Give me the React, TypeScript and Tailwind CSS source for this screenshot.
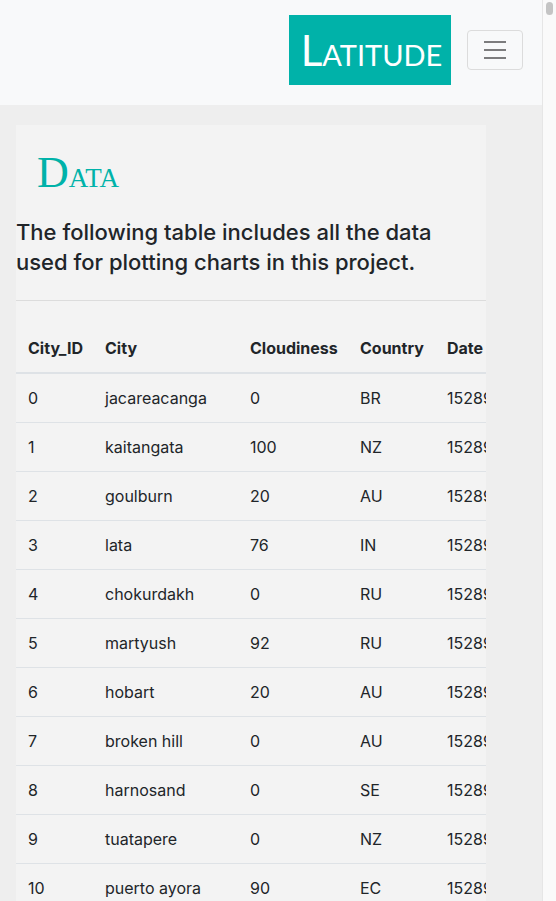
const rows = [
  ["0", "jacareacanga", "0", "BR", "1528968442"],
  ["1", "kaitangata", "100", "NZ", "1528968443"],
  ["2", "goulburn", "20", "AU", "1528968444"],
  ["3", "lata", "76", "IN", "1528968445"],
  ["4", "chokurdakh", "0", "RU", "1528968446"],
  ["5", "martyush", "92", "RU", "1528968447"],
  ["6", "hobart", "20", "AU", "1528968448"],
  ["7", "broken hill", "0", "AU", "1528968449"],
  ["8", "harnosand", "0", "SE", "1528968450"],
  ["9", "tuatapere", "0", "NZ", "1528968451"],
  ["10", "puerto ayora", "90", "EC", "1528968452"],
  ["11", "leningradskiy", "88", "RU", "1528968453"],
];

export default function App() {
  return (
    <div className="w-[556px] h-[901px] overflow-hidden flex font-['Inter',sans-serif] text-[#212529]">
      <div className="flex-1 flex flex-col bg-[#eeeeee] min-w-0">
        <nav className="h-[105px] shrink-0 bg-[#f8f9fa] flex items-start justify-end pr-[19px] pt-[15px]">
          <div className="w-[162px] h-[70px] pl-[3px] bg-[#00b2a9] text-white flex items-center justify-center font-['Lato',sans-serif] text-[42px] [font-variant:small-caps] leading-none">
            Latitude
          </div>
          <button className="ml-[16px] mt-[15px] w-[56px] h-[40px] border border-[#dcdcdc] rounded-[4px] flex items-center justify-center">
            <svg width="30" height="30" viewBox="0 0 30 30">
              <path d="M4 7h22M4 15h22M4 23h22" stroke="rgba(0,0,0,0.5)" strokeWidth="2" />
            </svg>
          </button>
        </nav>
        <div className="mt-[20px] ml-[16px] w-[470px] bg-[#f3f3f3] overflow-hidden">
          <h1 className="pl-[21px] pt-[24px] font-['Liberation_Serif',serif] text-[#00b2a9] leading-[48px] font-normal">
            <span className="text-[44px]">D</span>
            <span className="text-[27px] uppercase">ata</span>
          </h1>
          <p className="mt-[11px] text-[22px] leading-[30px] font-medium pr-[40px]">
            The following table includes all the data used for plotting charts in this project.
          </p>
          <hr className="mt-[23px] border-t border-[#dcdcdc]" />
          <table className="mt-[23px] table-fixed border-collapse w-[700px] text-[16px] leading-[24px]">
            <colgroup>
              <col className="w-[77px]" />
              <col className="w-[145px]" />
              <col className="w-[110px]" />
              <col className="w-[87px]" />
              <col className="w-[281px]" />
            </colgroup>
            <thead>
              <tr className="border-b-2 border-[#dee2e6]">
                {["City_ID", "City", "Cloudiness", "Country", "Date"].map((h) => (
                  <th key={h} className="p-[12px] text-left font-bold">
                    {h}
                  </th>
                ))}
              </tr>
            </thead>
            <tbody>
              {rows.map((r) => (
                <tr key={r[0]} className="border-b border-[#dee2e6]">
                  {r.map((c, i) => (
                    <td key={i} className="p-[12px] whitespace-nowrap">
                      {c}
                    </td>
                  ))}
                </tr>
              ))}
            </tbody>
          </table>
        </div>
      </div>
      <div className="w-[14px] shrink-0 bg-[#fafafa] border-l border-[#e6e6e6] pt-[2px] flex justify-center">
        <div className="w-[7px] h-[13px] rounded-full bg-[#c4c4c4]" />
      </div>
    </div>
  );
}
